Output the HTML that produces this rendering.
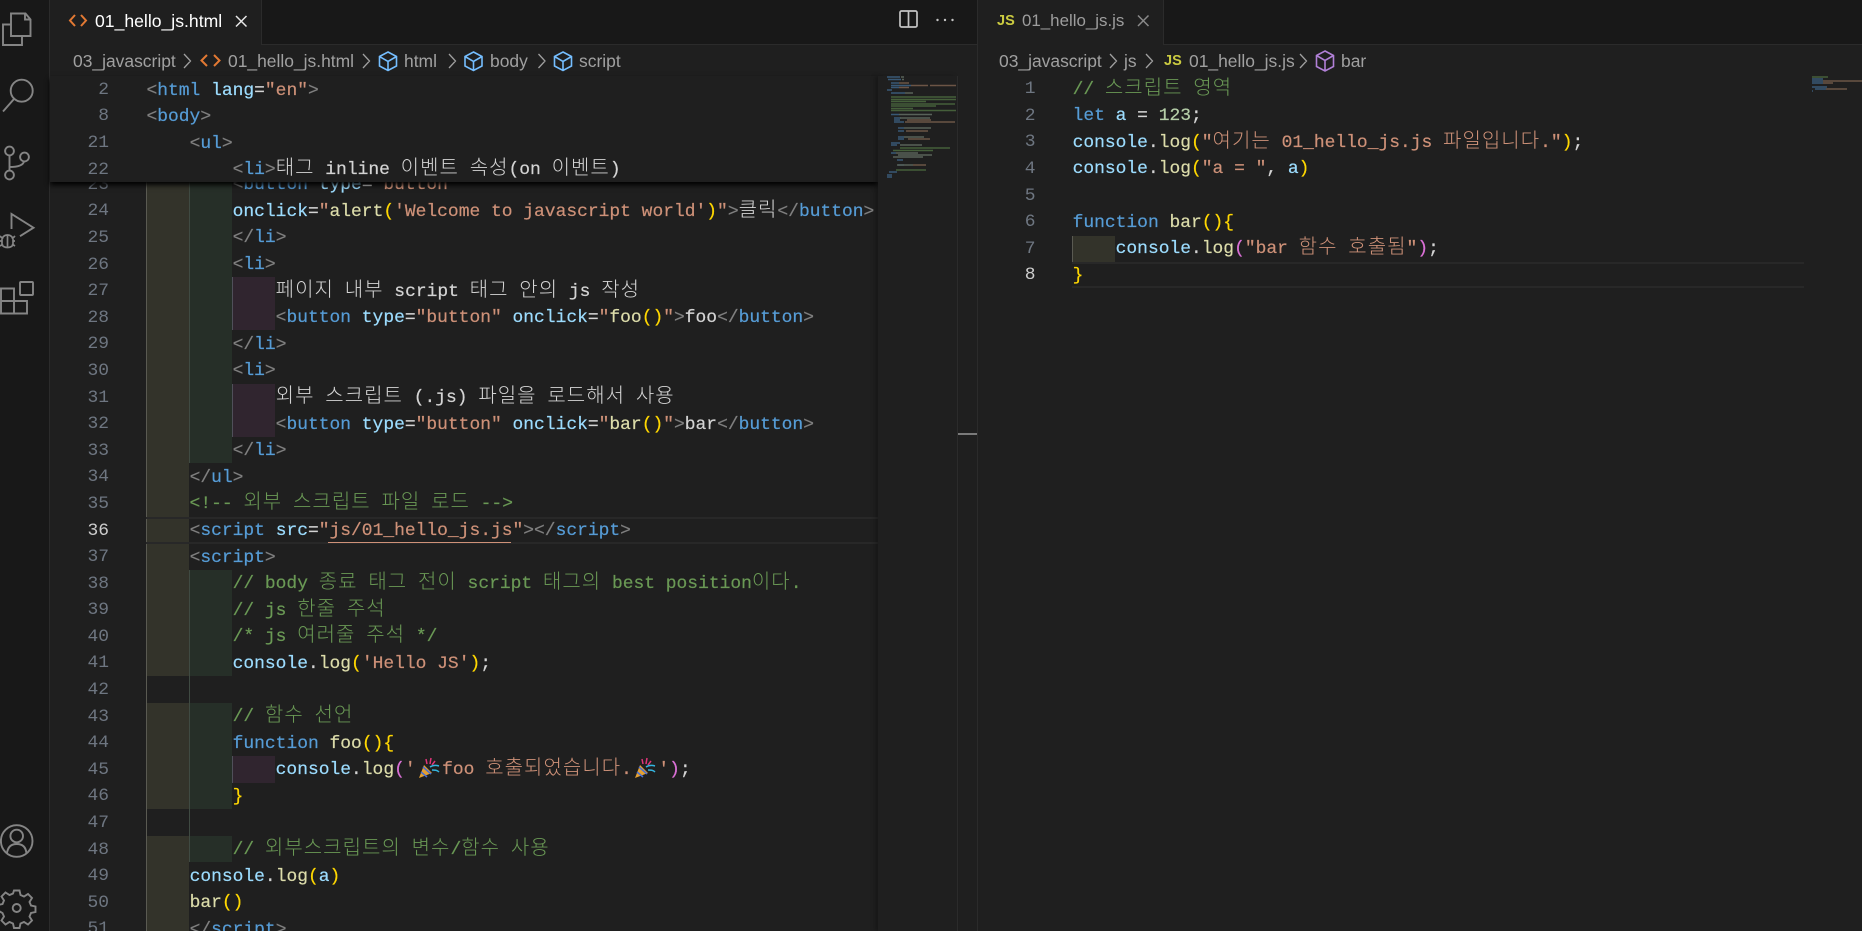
<!DOCTYPE html>
<html lang="ko"><head><meta charset="utf-8"><title>01_hello_js.html</title>
<style>
html,body{margin:0;padding:0;width:1862px;height:931px;overflow:hidden;background:#1f1f1f}
#w{position:absolute;left:0;top:0;width:1862px;height:931px;overflow:hidden}
.r{position:absolute;display:block}
.code,.nums{position:absolute;font:17.95px/26.6px "Liberation Mono",monospace;color:#d4d4d4}
.code{-webkit-text-stroke:.2px}
.code div,.nums div{height:26.6px;white-space:pre}
.nums{text-align:right;color:#6e7681;width:50px}
.code i{font-family:"Noto Sans CJK KR","NanumGothic",sans-serif;font-style:normal;font-size:20px;letter-spacing:1.02px;font-weight:300;line-height:1px;-webkit-text-stroke:0}
.t{color:#569cd6}.b{color:#808080}.a{color:#9cdcfe}.s{color:#ce9178}.c{color:#6a9955}.k{color:#569cd6}.f{color:#dcdcaa}.y{color:#ffd700}.p{color:#da70d6}.n{color:#b5cea8}
.ui{position:absolute;font:17.45px/24px "Liberation Sans",sans-serif;white-space:pre;color:#a0a0a0}
svg{position:absolute;overflow:visible}
.e{display:inline-block;width:26.5px;height:0;position:relative}
</style></head><body><div id="w">

<!-- activity bar -->
<div class="r" style="left:0;top:0;width:49px;height:931px;background:#181818"></div>
<div class="r" style="left:49px;top:0;width:1px;height:931px;background:#2b2b2b"></div>

<!-- tab bars -->
<div class="r" style="left:50px;top:0;width:1812px;height:44px;background:#181818"></div>
<div class="r" style="left:50px;top:44px;width:1812px;height:1px;background:#2b2b2b"></div>
<div class="r" style="left:50px;top:0;width:211px;height:45px;background:#1f1f1f"></div>
<div class="r" style="left:261px;top:0;width:1px;height:44px;background:#2b2b2b"></div>
<div class="r" style="left:978px;top:0;width:185px;height:45px;background:#1f1f1f"></div>
<div class="r" style="left:1163px;top:0;width:1px;height:44px;background:#2b2b2b"></div>
<div class="r" style="left:977px;top:0;width:1px;height:931px;background:#2b2b2b"></div>

<!-- activity icons -->
<svg style="left:0;top:0" width="49" height="931" fill="none" stroke="#858585" stroke-width="1.9">
<path d="M11 24.5H3v20.5h19v-8"/><path d="M11 13.5h14.5l5 6V36H11z"/><path d="M25 13.5v6h5.500"/>
<circle cx="21.700" cy="90.700" r="11"/><path d="M14 99L3 111.500"/>
<circle cx="9.500" cy="151" r="4.400"/><circle cx="24.500" cy="157" r="4.400"/><circle cx="9.500" cy="175" r="4.400"/><path d="M9.500 155.500v15M24 161.500c-1 4-7 5.500-14.500 5.500"/>
<path d="M11.500 229v-15l22 13.700-13.500 8.500"/>
<path d="M2 240c0-3 2.500-5 5.500-5s5.500 2 5.500 5v4c0 2-2.500 3.500-5.500 3.500S2 246 2 244zM7.500 235v12M0 236l3 3M15 236l-3 3M0 241h2M13 241h2M0 246l3-2M15 246l-3-2" stroke-width="1.700"/>
<rect x="20" y="282" width="13" height="13" rx="1"/><path d="M1 288.500h13v25H1zM1 301h26v12.500H14M14 301h13"/>
<circle cx="16.700" cy="841" r="15.800"/><circle cx="16.700" cy="836" r="6.300"/><path d="M7 853c1-7 5-9 9.700-9s9 2 9.700 9"/>
<path d="M14 892h5.500l1 4.500 3.500 1.500 4-2.500 4 4-2.500 4 1.500 3.500 4.500 1v5.500l-4.500 1-1.500 3.500 2.500 4-4 4-4-2.500-3.500 1.500-1 4.500H14l-1-4.500-3.500-1.500-4 2.500-4-4 2.500-4-1.500-3.500L-2 912v-5.500l4.500-1 1.500-3.500-2.500-4 4-4 4 2.500 3.500-1.500z" transform="translate(0,-1.500)"/>
<circle cx="16.700" cy="908" r="4"/>
</svg>

<!-- tab content -->
<svg style="left:0;top:0" width="1862" height="80" fill="none">
<path d="M75 15l-5 5.500 5 5.500M81 15l5 5.500-5 5.500" stroke="#e37933" stroke-width="2"/>
<path d="M236 16l10.500 10.500M246.500 16L236 26.500" stroke="#e8e8e8" stroke-width="1.500"/>
<path d="M1138 15.500l10.500 10.500M1148.500 15.500L1138 26" stroke="#8a8a8a" stroke-width="1.500"/>
<rect x="900" y="11" width="17" height="16" rx="1.500" stroke="#c4c4c4" stroke-width="1.700"/><path d="M908.500 11v16" stroke="#c4c4c4" stroke-width="1.700"/>
<circle cx="937.500" cy="20" r="1.200" fill="#c4c4c4"/><circle cx="945" cy="20" r="1.200" fill="#c4c4c4"/><circle cx="952.500" cy="20" r="1.200" fill="#c4c4c4"/>
<path d="M207 55l-5.500 5.500 5.500 5.500M214 55l5.500 5.500-5.500 5.500" stroke="#e37933" stroke-width="2"/>
<g stroke="#a0a0a0" stroke-width="1.300"><path d="M184 54l6.500 7-6.500 7M363 54l6.500 7-6.500 7M449 54l6.500 7-6.500 7M538.500 54l6.500 7-6.500 7M1110 54l6.500 7-6.500 7M1146 54l6.500 7-6.500 7M1300 54l6.500 7-6.500 7"/></g>
<g stroke="#75beff" stroke-width="1.600"><path d="M388 52l8.500 4.500v9.500l-8.500 4.500-8.500-4.500v-9.500zM379.500 56.500l8.500 5 8.500-5M388 61.500v9"/><path d="M473.500 52l8.500 4.500v9.500l-8.500 4.500-8.500-4.500v-9.500zM465 56.500l8.500 5 8.500-5M473.500 61.500v9"/><path d="M563 52l8.500 4.500v9.500l-8.500 4.500-8.500-4.500v-9.500zM554.500 56.500l8.500 5 8.500-5M563 61.500v9"/></g>
<path d="M1325 51l8.500 4.500v11l-8.500 4.500-8.500-4.500v-11zM1316.500 55.500l8.500 5 8.500-5M1325 60.500v10" stroke="#b180d7" stroke-width="1.600"/>
</svg>
<div class="ui" style="left:95px;top:9px;color:#fff;font-size:17.6px">01_hello_js.html</div>
<div class="ui" style="left:1022px;top:9px;color:#9d9d9d;font-size:16.9px">01_hello_js.js</div>
<div class="ui" style="left:997px;top:11px;font:bold 14.500px/20px 'Liberation Sans',sans-serif;color:#cbcb41">JS</div>
<div class="ui" style="left:73px;top:49px">03_javascript</div>
<div class="ui" style="left:228px;top:49px">01_hello_js.html</div>
<div class="ui" style="left:404px;top:49px">html</div>
<div class="ui" style="left:490px;top:49px">body</div>
<div class="ui" style="left:579px;top:49px">script</div>
<div class="ui" style="left:999px;top:49px">03_javascript</div>
<div class="ui" style="left:1124px;top:49px">js</div>
<div class="ui" style="left:1164px;top:51px;font:bold 14.500px/20px 'Liberation Sans',sans-serif;color:#cbcb41">JS</div>
<div class="ui" style="left:1189px;top:49px">01_hello_js.js</div>
<div class="ui" style="left:1341px;top:49px">bar</div>

<!-- indent highlights -->
<div class="r" style="left:146px;top:170.800px;width:43px;height:505.400px;background:#33332a"></div>
<div class="r" style="left:146px;top:702.800px;width:43px;height:106.400px;background:#33332a"></div>
<div class="r" style="left:146px;top:835.800px;width:43px;height:96px;background:#33332a"></div>
<div class="r" style="left:189px;top:170.800px;width:43px;height:292.600px;background:#262f28"></div>
<div class="r" style="left:189px;top:569.800px;width:43px;height:106.400px;background:#262f28"></div>
<div class="r" style="left:189px;top:702.800px;width:43px;height:106.400px;background:#262f28"></div>
<div class="r" style="left:189px;top:835.800px;width:43px;height:26.600px;background:#262f28"></div>
<div class="r" style="left:232px;top:277.200px;width:43px;height:53.200px;background:#30252f"></div>
<div class="r" style="left:232px;top:383.600px;width:43px;height:53.200px;background:#30252f"></div>
<div class="r" style="left:232px;top:756px;width:43px;height:26.600px;background:#30252f"></div>
<div class="r" style="left:146px;top:170px;width:1px;height:761px;background:#5a5a52"></div>
<div class="r" style="left:188.500px;top:170px;width:1px;height:293.400px;background:#3f4a42"></div>
<div class="r" style="left:188.500px;top:569.800px;width:1px;height:292.600px;background:#3f4a42"></div>
<div class="r" style="left:232px;top:277.200px;width:1px;height:53.200px;background:#50505a"></div>
<div class="r" style="left:232px;top:383.600px;width:1px;height:53.200px;background:#50505a"></div>
<div class="r" style="left:232px;top:756px;width:1px;height:26.600px;background:#50505a"></div>
<div class="r" style="left:1072px;top:236px;width:43px;height:26px;background:#33332a;border-left:1px solid #5a5a52;box-sizing:border-box"></div>

<!-- current lines -->
<div class="r" style="left:146px;top:516.500px;width:732px;height:2px;background:#282828"></div>
<div class="r" style="left:146px;top:541.500px;width:732px;height:2px;background:#282828"></div>
<div class="r" style="left:1072px;top:261.500px;width:732px;height:2px;background:#282828"></div>
<div class="r" style="left:1072px;top:286px;width:732px;height:2px;background:#282828"></div>
<div class="r" style="left:328px;top:541.500px;width:183px;height:1.500px;background:#ce9178"></div>

<!-- left line numbers -->
<div class="nums" style="left:59px;top:171.800px"><div>23</div><div>24</div><div>25</div><div>26</div><div>27</div><div>28</div><div>29</div><div>30</div><div>31</div><div>32</div><div>33</div><div>34</div><div>35</div><div style="color:#ccc">36</div><div>37</div><div>38</div><div>39</div><div>40</div><div>41</div><div>42</div><div>43</div><div>44</div><div>45</div><div>46</div><div>47</div><div>48</div><div>49</div><div>50</div><div>51</div></div>

<!-- left code -->
<div class="code" style="left:146.500px;top:172.300px">
<div>        <span class="b">&lt;</span><span class="t">button</span> <span class="a">type</span>=<span class="s">"button"</span></div>
<div>        <span class="a">onclick</span>=<span class="s">"</span><span class="f">alert</span><span class="y">(</span><span class="s">'Welcome to javascript world'</span><span class="y">)</span><span class="s">"</span><span class="b">&gt;</span><i>클릭</i><span class="b">&lt;/</span><span class="t">button</span><span class="b">&gt;</span></div>
<div>        <span class="b">&lt;/</span><span class="t">li</span><span class="b">&gt;</span></div>
<div>        <span class="b">&lt;</span><span class="t">li</span><span class="b">&gt;</span></div>
<div>            <i>페이지</i> <i>내부</i> script <i>태그</i> <i>안의</i> js <i>작성</i></div>
<div>            <span class="b">&lt;</span><span class="t">button</span> <span class="a">type</span>=<span class="s">"button"</span> <span class="a">onclick</span>=<span class="s">"</span><span class="f">foo</span><span class="y">()</span><span class="s">"</span><span class="b">&gt;</span>foo<span class="b">&lt;/</span><span class="t">button</span><span class="b">&gt;</span></div>
<div>        <span class="b">&lt;/</span><span class="t">li</span><span class="b">&gt;</span></div>
<div>        <span class="b">&lt;</span><span class="t">li</span><span class="b">&gt;</span></div>
<div>            <i>외부</i> <i>스크립트</i> (.js) <i>파일을</i> <i>로드해서</i> <i>사용</i></div>
<div>            <span class="b">&lt;</span><span class="t">button</span> <span class="a">type</span>=<span class="s">"button"</span> <span class="a">onclick</span>=<span class="s">"</span><span class="f">bar</span><span class="y">()</span><span class="s">"</span><span class="b">&gt;</span>bar<span class="b">&lt;/</span><span class="t">button</span><span class="b">&gt;</span></div>
<div>        <span class="b">&lt;/</span><span class="t">li</span><span class="b">&gt;</span></div>
<div>    <span class="b">&lt;/</span><span class="t">ul</span><span class="b">&gt;</span></div>
<div class="c">    &lt;!-- <i>외부</i> <i>스크립트</i> <i>파일</i> <i>로드</i> --&gt;</div>
<div>    <span class="b">&lt;</span><span class="t">script</span> <span class="a">src</span>=<span class="s">"js/01_hello_js.js"</span><span class="b">&gt;&lt;/</span><span class="t">script</span><span class="b">&gt;</span></div>
<div>    <span class="b">&lt;</span><span class="t">script</span><span class="b">&gt;</span></div>
<div class="c">        // body <i>종료</i> <i>태그</i> <i>전이</i> script <i>태그의</i> best position<i>이다</i>.</div>
<div class="c">        // js <i>한줄</i> <i>주석</i></div>
<div class="c">        /* js <i>여러줄</i> <i>주석</i> */</div>
<div>        <span class="a">console</span>.<span class="f">log</span><span class="y">(</span><span class="s">'Hello JS'</span><span class="y">)</span>;</div>
<div></div>
<div class="c">        // <i>함수</i> <i>선언</i></div>
<div>        <span class="k">function</span> <span class="f">foo</span><span class="y">(){</span></div>
<div>            <span class="a">console</span>.<span class="f">log</span><span class="p">(</span><span class="s">'</span><span class="e"><svg width="22" height="22" style="left:2px;top:-17px"><path d="M1 21l5-13 8 8z" fill="#e5a030"/><path d="M3 15l6 5M5 10l8 7" stroke="#4a6fd0" stroke-width="1.500"/><path d="M8 2l1 5M13 1l-1 6M17 4l-3 4" stroke="#e0357a" stroke-width="1.500" fill="none"/><path d="M12 10c3-2 6-2 9-1M14 13c3 0 5 0 7 2" stroke="#35b5e0" stroke-width="1.500" fill="none"/></svg></span><span class="s">foo <i>호출되었습니다</i>.</span><span class="e"><svg width="22" height="22" style="left:2px;top:-17px"><path d="M1 21l5-13 8 8z" fill="#e5a030"/><path d="M3 15l6 5M5 10l8 7" stroke="#4a6fd0" stroke-width="1.500"/><path d="M8 2l1 5M13 1l-1 6M17 4l-3 4" stroke="#e0357a" stroke-width="1.500" fill="none"/><path d="M12 10c3-2 6-2 9-1M14 13c3 0 5 0 7 2" stroke="#35b5e0" stroke-width="1.500" fill="none"/></svg></span><span class="s">'</span><span class="p">)</span>;</div>
<div>        <span class="y">}</span></div>
<div></div>
<div class="c">        // <i>외부스크립트의</i> <i>변수</i>/<i>함수</i> <i>사용</i></div>
<div>    <span class="a">console</span>.<span class="f">log</span><span class="y">(</span><span class="a">a</span><span class="y">)</span></div>
<div>    <span class="f">bar</span><span class="y">()</span></div>
<div>    <span class="b">&lt;/</span><span class="t">script</span><span class="b">&gt;</span></div>
</div>

<!-- sticky scroll -->
<div class="r" style="left:50px;top:76px;width:828px;height:106px;background:#1f1f1f;box-shadow:0 3px 5px #000"></div>
<div class="nums" style="left:59px;top:76.800px"><div>2</div><div>8</div><div>21</div><div>22</div></div>
<div class="code" style="left:146.500px;top:77.500px">
<div><span class="b">&lt;</span><span class="t">html</span> <span class="a">lang</span>=<span class="s">"en"</span><span class="b">&gt;</span></div>
<div><span class="b">&lt;</span><span class="t">body</span><span class="b">&gt;</span></div>
<div>    <span class="b">&lt;</span><span class="t">ul</span><span class="b">&gt;</span></div>
<div>        <span class="b">&lt;</span><span class="t">li</span><span class="b">&gt;</span><i>태그</i> inline <i>이벤트</i> <i>속성</i>(on <i>이벤트</i>)</div>
</div>

<!-- left minimap + scrollbar -->
<div class="r" style="left:878px;top:76px;width:79px;height:855px;background:#1f1f1f;box-shadow:-3px 0 4px rgba(0,0,0,.25)"></div>
<div class="r" style="left:957px;top:76px;width:1px;height:855px;background:#2b2b2b"></div>
<div class="r" style="left:958px;top:433px;width:19px;height:2px;background:#7a7a7a"></div>
<svg style="left:0;top:0" width="1862" height="200" fill="none" stroke-width="1.500" opacity=".6">
<path stroke="#4a7fae" d="M887 77h13M888 79.500h13M891 83h8M891 85.500h20M891 87.500h8M887 90h5M891 93h14M891 114.500h8M894 118h7M894 120h6M894 122h10M898 128h6M898 131h6M898 137h6M898 139h6M891 143h9M891 145h6M891 153h5M897 160h6M898 165h6M889 172h8M887 175h5M887 177h5"/>
<path stroke="#a07a60" d="M899 83h10M911 85.500h17M930 85.500h26M899 87.500h10M907 120h24M905 122h50M906 131h22M908 139h22M913 165h13"/>
<path stroke="#7f8f80" d="M901 77h3M902 79.500h2M905 93h8M899 114.500h33M900 118h30M904 128h27M904 137h20M900 145h22M896 153h22M898 155h34M893 157h30M897 165h16"/>
<path stroke="#5f8b4c" d="M891 97h50M891 99.500h65M891 101.500h35M891 104h64M891 106h45M891 108.500h22M891 110.500h65M900 148h50M893 150.500h40M896 170h30M928 97h28"/>
</svg>
<svg style="left:0;top:0" width="1862" height="100" fill="none" stroke-width="1.500" opacity=".6">
<path stroke="#5f8b4c" d="M1812 77h16"/>
<path stroke="#4a7fae" d="M1812 79h11M1812 81h11M1812 83h11M1812 87h15M1815 89h11M1812 91h1"/>
<path stroke="#a07a60" d="M1823 81h39M1823 83h10M1826 89h21"/>
</svg>

<!-- right line numbers -->
<div class="nums" style="left:985.500px;top:76.200px"><div>1</div><div>2</div><div>3</div><div>4</div><div>5</div><div>6</div><div>7</div><div style="color:#ccc">8</div></div>

<!-- right code -->
<div class="code" style="left:1072.600px;top:76.700px">
<div class="c">// <i>스크립트</i> <i>영역</i></div>
<div><span class="k">let</span> <span class="a">a</span> = <span class="n">123</span>;</div>
<div><span class="a">console</span>.<span class="f">log</span><span class="y">(</span><span class="s">"<i>여기는</i> 01_hello_js.js <i>파일입니다</i>."</span><span class="y">)</span>;</div>
<div><span class="a">console</span>.<span class="f">log</span><span class="y">(</span><span class="s">"a = "</span>, <span class="a">a</span><span class="y">)</span></div>
<div></div>
<div><span class="k">function</span> <span class="f">bar</span><span class="y">(){</span></div>
<div>    <span class="a">console</span>.<span class="f">log</span><span class="p">(</span><span class="s">"bar <i>함수</i> <i>호출됨</i>"</span><span class="p">)</span>;</div>
<div><span class="y">}</span></div>
</div>

</div></body></html>
